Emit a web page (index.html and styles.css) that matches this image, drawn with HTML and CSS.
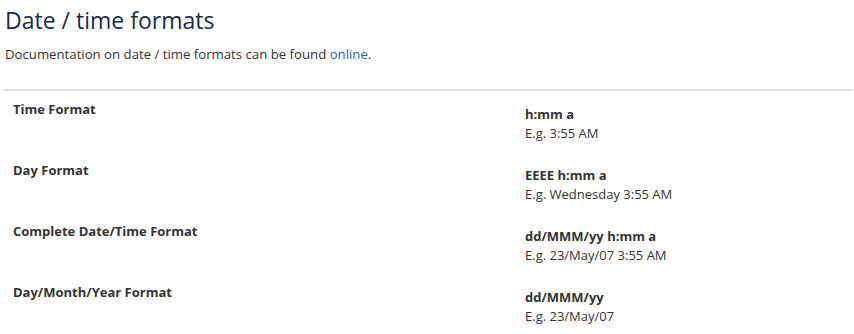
FILE: index.html
```html
<!DOCTYPE html>
<html lang="en">
<head>
    <meta charset="UTF-8">
    <title>Date / time formats</title>
    <link rel="stylesheet" href="styles.css">
</head>
<body>
    <h1>Date / time formats</h1>
    <p class="intro">Documentation on date / time formats can be found <a href="#">online</a>.</p>

    <div class="formats">
        <div class="format-row">
            <div class="label">Time Format</div>
            <div class="value">
                <strong>h:mm a</strong>
                <span>E.g. 3:55 AM</span>
            </div>
        </div>
        <div class="format-row">
            <div class="label">Day Format</div>
            <div class="value">
                <strong>EEEE h:mm a</strong>
                <span>E.g. Wednesday 3:55 AM</span>
            </div>
        </div>
        <div class="format-row">
            <div class="label">Complete Date/Time Format</div>
            <div class="value">
                <strong>dd/MMM/yy h:mm a</strong>
                <span>E.g. 23/May/07 3:55 AM</span>
            </div>
        </div>
        <div class="format-row">
            <div class="label">Day/Month/Year Format</div>
            <div class="value">
                <strong>dd/MMM/yy</strong>
                <span>E.g. 23/May/07</span>
            </div>
        </div>
    </div>
</body>
</html>
```

FILE: styles.css
```css
body { font-family: "Open Sans", "Noto Sans", sans-serif; margin: 0; padding: 0 1px 0 4px; background: #fff; color: #333; font-size: 13px; }
h1 { color: #172b4d; font-size: 23px; font-weight: 500; margin: 6px 0 0 1px; line-height: 28px; }
.intro { margin: 11px 0 0 1px; line-height: 18px; font-size: 13.2px; }
.intro a, .intro a:visited { color: #2f5f9e; text-decoration: none; }

.formats { margin-top: 26px; border-top: 2px solid #dfdfdf; }
.format-row { display: grid; grid-template-columns: 512px 1fr; height: 61px; }
.label { font-weight: 700; padding: 9px 0 0 9px; line-height: 18px; }
.value { padding: 14px 0 0 9px; line-height: 19px; }
.value strong, .value span { display: block; }
```
